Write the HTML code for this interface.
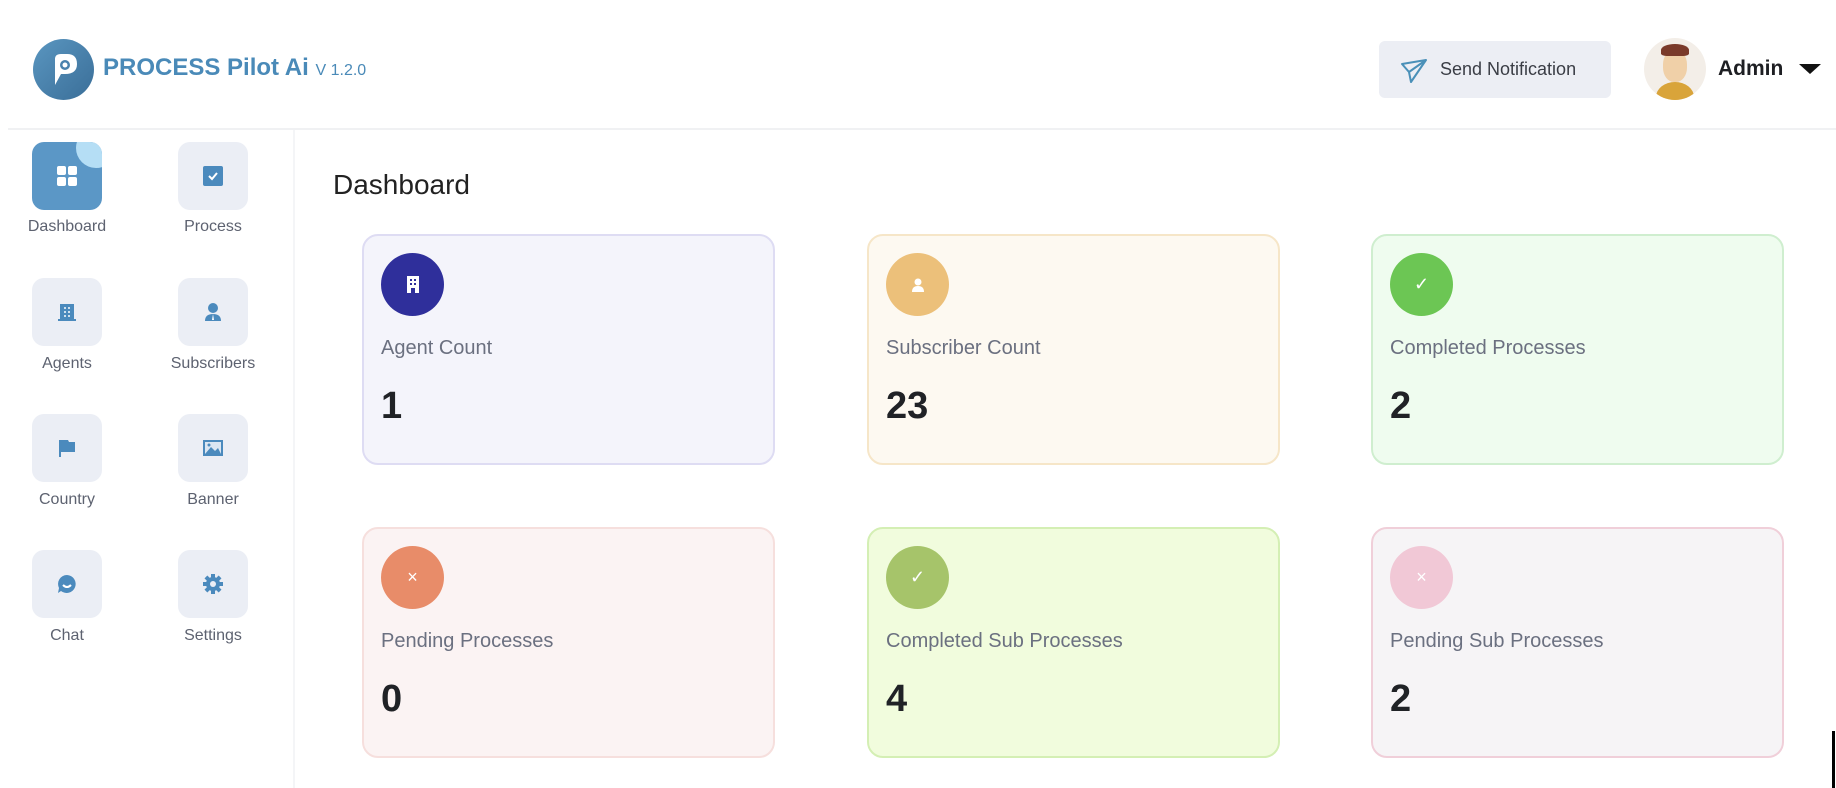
<!DOCTYPE html>
<html><head><style>
*{margin:0;padding:0;box-sizing:border-box}
body{width:1836px;height:788px;background:#fff;font-family:"Liberation Sans",sans-serif;position:relative;overflow:hidden}
.abs{position:absolute}
.hline{left:8px;right:0;top:128px;height:2px;background:#f0f1f3}
.vline{left:293px;top:130px;bottom:0;width:2px;background:#f4f5f7}
.nb{position:absolute;width:70px;height:68px;border-radius:12px;background:#ebeef5;display:flex;align-items:center;justify-content:center}
.nl{position:absolute;width:110px;text-align:center;font-size:16px;color:#5d6270}
.card{position:absolute;width:413px;height:231px;border-radius:16px;border:2px solid}
.ic{position:absolute;left:17px;top:17px;width:63px;height:63px;border-radius:50%;display:flex;align-items:center;justify-content:center;color:#fff;font-size:18px}
.lb{position:absolute;left:17px;top:101px;font-size:20px;color:#6b7080}
.num{position:absolute;left:17px;top:149px;font-size:38px;font-weight:bold;color:#202226}
</style></head><body>
<div class="abs" style="left:33px;top:39px;width:61px;height:61px;border-radius:50%;background:linear-gradient(135deg,#5a96c0,#3a6e98)">
<svg width="61" height="61" viewBox="0 0 61 61"><path d="M22 46 L22 20 Q22 15 28 15 L34 15 Q44 15 44 25 Q44 35 32 35 L28 35 Z" fill="#fff"/><circle cx="32" cy="26" r="5" fill="#4a82ad"/><circle cx="32" cy="26" r="2.5" fill="#fff"/></svg></div>
<div class="abs" style="left:103px;top:54px;font-size:24px;font-weight:bold;color:#4a8ab8">PROCESS Pilot Ai <span style="font-size:16px;font-weight:normal">V 1.2.0</span></div>
<div class="abs" style="left:1379px;top:41px;width:232px;height:57px;border-radius:6px;background:#eceef4"></div>
<svg class="abs" style="left:1400px;top:58px" width="28" height="26" viewBox="0 0 28 26"><path d="M2 6 L26 2 L11 24 L9 14 Z M9 14 L26 2" fill="none" stroke="#4a90b8" stroke-width="2" stroke-linejoin="round"/></svg>
<div class="abs" style="left:1440px;top:59px;font-size:18px;color:#3a3d45">Send Notification</div>
<div class="abs" style="left:1644px;top:38px;width:62px;height:62px;border-radius:50%;background:#f3eee8;overflow:hidden">
<div class="abs" style="left:12px;top:44px;width:38px;height:30px;border-radius:50%;background:#d9a43a"></div>
<div class="abs" style="left:19px;top:12px;width:24px;height:32px;border-radius:45%;background:#f0d0a8"></div>
<div class="abs" style="left:17px;top:6px;width:28px;height:12px;border-radius:50% 50% 20% 20%;background:#7a3a2a"></div></div>
<div class="abs" style="left:1718px;top:57px;font-size:21px;font-weight:bold;color:#1e1f23">Admin</div>
<div class="abs" style="left:1799px;top:64px;width:0;height:0;border-left:11px solid transparent;border-right:11px solid transparent;border-top:10px solid #111"></div>
<div class="abs hline"></div><div class="abs vline"></div>

<div class="nb" style="left:32px;top:142px;background:#5b97c6;overflow:hidden"><div class="abs" style="right:-14px;top:-14px;width:40px;height:40px;border-radius:50%;background:#b5def5"></div>
<svg width="22" height="22" viewBox="0 0 22 22" style="position:relative"><rect x="1" y="1" width="9" height="9" rx="2" fill="#fff"/><rect x="12" y="1" width="9" height="9" rx="2" fill="#fff"/><rect x="1" y="12" width="9" height="9" rx="2" fill="#fff"/><rect x="12" y="12" width="9" height="9" rx="2" fill="#fff"/></svg></div>
<div class="nl" style="left:12px;top:218px">Dashboard</div>
<div class="nb" style="left:178px;top:142px"><svg width="20" height="20"><rect width="20" height="20" rx="2" fill="#4b8abd"/><path d="M6 10 L9 13 L14 7" stroke="#fff" stroke-width="2" fill="none"/></svg></div>
<div class="nl" style="left:158px;top:218px">Process</div>
<div class="nb" style="left:32px;top:278px"><svg width="20" height="20"><rect x="3" y="2" width="14" height="16" fill="#4b8abd"/><rect x="1" y="17" width="18" height="2" fill="#4b8abd"/><g fill="#cfe0ee"><rect x="7" y="5" width="2" height="2"/><rect x="11" y="5" width="2" height="2"/><rect x="7" y="9" width="2" height="2"/><rect x="11" y="9" width="2" height="2"/><rect x="7" y="13" width="2" height="2"/><rect x="11" y="13" width="2" height="2"/></g></svg></div>
<div class="nl" style="left:12px;top:355px">Agents</div>
<div class="nb" style="left:178px;top:278px"><svg width="20" height="20"><circle cx="10" cy="6" r="5" fill="#4b8abd"/><path d="M2 19 Q2 12 10 12 Q18 12 18 19 Z" fill="#4b8abd"/><path d="M10 12 L9 18 L11 18 Z" fill="#fff"/></svg></div>
<div class="nl" style="left:158px;top:355px">Subscribers</div>
<div class="nb" style="left:32px;top:414px"><svg width="20" height="20"><path d="M3 2 L3 19" stroke="#4b8abd" stroke-width="2"/><path d="M4 2 L11 2 L12 4 L18 4 L18 14 L4 14 Z" fill="#4b8abd"/></svg></div>
<div class="nl" style="left:12px;top:491px">Country</div>
<div class="nb" style="left:178px;top:414px"><svg width="22" height="20"><rect x="1" y="2" width="20" height="16" fill="#4b8abd"/><rect x="3" y="4" width="16" height="12" fill="#dbe6f2"/><path d="M3 16 L9 9 L13 13 L16 10 L19 16 Z" fill="#4b8abd"/><circle cx="7" cy="7" r="1.5" fill="#4b8abd"/></svg></div>
<div class="nl" style="left:158px;top:491px">Banner</div>
<div class="nb" style="left:32px;top:550px"><svg width="22" height="22"><path d="M11 2 A9 9 0 1 1 5 18 L2 20 L3 15 A9 9 0 0 1 11 2 Z" fill="#4b8abd"/><path d="M7 12 Q11 16 15 12" stroke="#fff" stroke-width="2" fill="none"/></svg></div>
<div class="nl" style="left:12px;top:627px">Chat</div>
<div class="nb" style="left:178px;top:550px"><svg width="22" height="22" viewBox="0 0 22 22"><g fill="#4b8abd"><circle cx="11" cy="11" r="7"/><rect x="9" y="1" width="4" height="20"/><rect x="1" y="9" width="20" height="4"/><rect x="9" y="1" width="4" height="20" transform="rotate(45 11 11)"/><rect x="9" y="1" width="4" height="20" transform="rotate(-45 11 11)"/></g><circle cx="11" cy="11" r="3" fill="#ebeef5"/></svg></div>
<div class="nl" style="left:158px;top:627px">Settings</div>

<div class="abs" style="left:333px;top:169px;font-size:28px;color:#222">Dashboard</div>

<div class="card" style="left:362px;top:234px;background:#f4f4fb;border-color:#dedcf3"><div class="ic" style="background:#2f2f9b"><svg width="14" height="18"><rect x="1" y="0" width="12" height="17" fill="#fff"/><g fill="#2f2f9b"><rect x="4" y="3" width="2" height="2"/><rect x="8" y="3" width="2" height="2"/><rect x="4" y="7" width="2" height="2"/><rect x="8" y="7" width="2" height="2"/><rect x="5" y="12" width="4" height="5"/></g></svg></div><div class="lb">Agent Count</div><div class="num">1</div></div>
<div class="card" style="left:867px;top:234px;background:#fdf9f1;border-color:#f6e6c8"><div class="ic" style="background:#ecc07a"><svg width="14" height="14"><circle cx="7" cy="4" r="3.5" fill="#fff"/><path d="M1 14 Q1 8 7 8 Q13 8 13 14 Z" fill="#fff"/></svg></div><div class="lb">Subscriber Count</div><div class="num">23</div></div>
<div class="card" style="left:1371px;top:234px;background:#effcef;border-color:#cfeecf"><div class="ic" style="background:#6cc654">✓</div><div class="lb">Completed Processes</div><div class="num">2</div></div>
<div class="card" style="left:362px;top:527px;background:#fbf3f3;border-color:#f6dfdd"><div class="ic" style="background:#e88c69">×</div><div class="lb">Pending Processes</div><div class="num">0</div></div>
<div class="card" style="left:867px;top:527px;background:#f1fcdd;border-color:#d4efb4"><div class="ic" style="background:#a6c46a">✓</div><div class="lb">Completed Sub Processes</div><div class="num">4</div></div>
<div class="card" style="left:1371px;top:527px;background:#f6f4f6;border-color:#f0cfd9"><div class="ic" style="background:#f1c8d6">×</div><div class="lb">Pending Sub Processes</div><div class="num">2</div></div>

<div class="abs" style="left:1832px;top:731px;width:3px;height:57px;background:#000"></div>
</body></html>
